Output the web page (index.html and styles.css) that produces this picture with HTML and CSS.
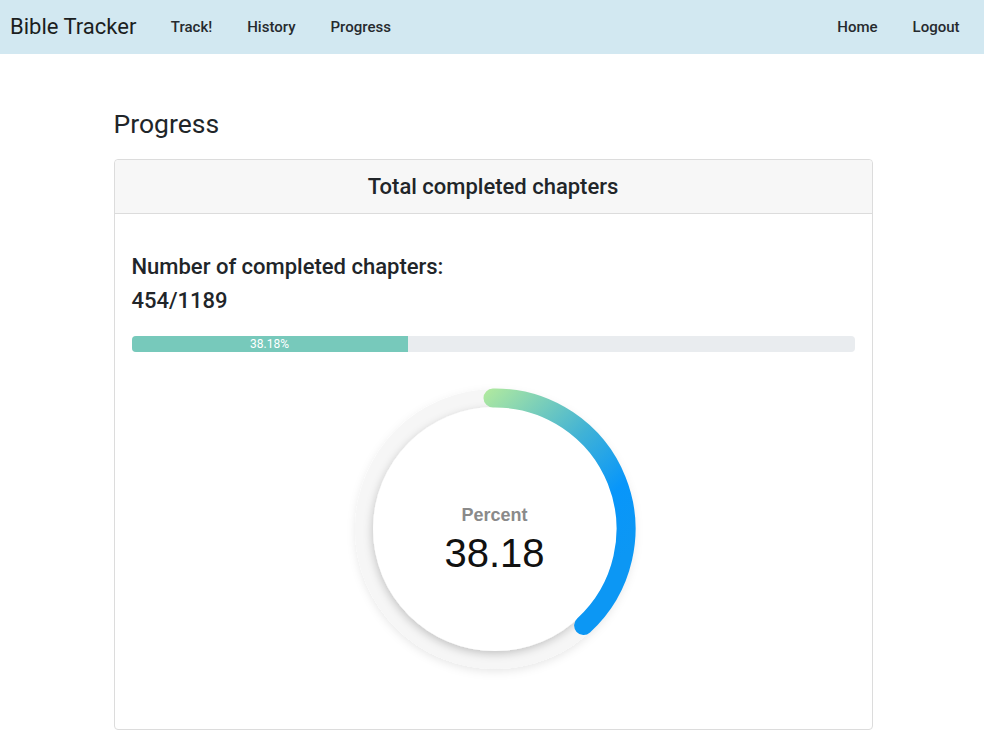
FILE: index.html
```html
<!DOCTYPE html>
<html lang="en">
<head>
<meta charset="utf-8">
<title>Bible Tracker - Progress</title>
<link rel="stylesheet" href="styles.css">
</head>
<body>
<nav class="navbar">
  <a class="brand" href="#">Bible Tracker</a>
  <ul class="nav-links">
    <li><a href="#">Track!</a></li>
    <li><a href="#">History</a></li>
    <li><a href="#">Progress</a></li>
  </ul>
  <ul class="nav-links nav-right">
    <li><a href="#">Home</a></li>
    <li><a href="#">Logout</a></li>
  </ul>
</nav>
<main class="container">
  <h2 class="page-title">Progress</h2>
  <section class="card">
    <div class="card-header">Total completed chapters</div>
    <div class="card-body">
      <h5 class="stat-label">Number of completed chapters:</h5>
      <h5 class="stat-value">454/1189</h5>
      <div class="progress">
        <div class="progress-bar" style="width: 38.18%">38.18%</div>
      </div>
      <div class="gauge">
        <svg class="gauge-svg" width="300" height="300" viewBox="0 0 300 300">
          <defs>
            <linearGradient id="arcGrad" gradientUnits="userSpaceOnUse" x1="135" y1="19" x2="281" y2="175">
              <stop offset="0" stop-color="#aee8a0"/>
              <stop offset="0.45" stop-color="#40b2d6"/>
              <stop offset="0.75" stop-color="#0896fa"/>
              <stop offset="1" stop-color="#0c97f4"/>
            </linearGradient>
            <filter id="outerShadow" x="-20%" y="-20%" width="140%" height="140%">
              <feDropShadow dx="0" dy="3" stdDeviation="4" flood-color="#000" flood-opacity="0.09"/>
            </filter>
            <filter id="innerShadow" x="-20%" y="-20%" width="140%" height="140%">
              <feDropShadow dx="-1" dy="3" stdDeviation="4" flood-color="#000" flood-opacity="0.2"/>
            </filter>
          </defs>
          <circle cx="150" cy="150" r="140" fill="#f6f6f6" filter="url(#outerShadow)"/>
          <circle cx="150" cy="150" r="122" fill="#ffffff" filter="url(#innerShadow)"/>
          <path d="M148 19 A131 131 0 0 1 238.6 246.5" fill="none" stroke="url(#arcGrad)" stroke-width="19" stroke-linecap="round"/>
        </svg>
        <div class="gauge-text">
          <div class="gauge-label">Percent</div>
          <div class="gauge-value">38.18</div>
        </div>
      </div>
    </div>
  </section>
</main>
</body>
</html>
```
FILE: styles.css
```css
* { box-sizing: border-box; }
html, body {
  margin: 0;
  padding: 0;
  background: #fff;
  font-family: Roboto, "Liberation Sans", Arial, sans-serif;
  color: #212529;
}
a { text-decoration: none; }

.navbar {
  display: flex;
  align-items: center;
  height: 54px;
  padding: 0 7px 0 10px;
  background: #d2e8f1;
}
.brand {
  font-size: 22px;
  color: #1b1e21;
  margin-right: 17px;
  line-height: 1;
}
.nav-links {
  display: flex;
  list-style: none;
  margin: 0;
  padding: 0;
}
.nav-links a {
  display: block;
  padding: 8px 17.5px;
  font-size: 15px;
  font-weight: 500;
  color: #262a2e;
}
.nav-right { margin-left: auto; }

.container {
  width: 759px;
  margin: 0 auto;
  padding-top: 54px;
  position: relative;
  left: 1px;
}
.page-title {
  margin: 0 0 19px;
  font-size: 26.5px;
  font-weight: 400;
  line-height: 32px;
  color: #212529;
}

.card {
  border: 1px solid #dcdcdc;
  border-radius: 4px;
  background: #fff;
}
.card-header {
  height: 54px;
  display: flex;
  align-items: center;
  justify-content: center;
  background: #f7f7f7;
  border-bottom: 1px solid #dcdcdc;
  font-size: 22px;
  font-weight: 500;
  border-radius: 4px 4px 0 0;
}
.card-body {
  padding: 40px 17px 50px;
}
.stat-label, .stat-value {
  margin: 0 0 8px;
  font-size: 22px;
  font-weight: 500;
  line-height: 26px;
  color: #212529;
}
.stat-value { margin-bottom: 22px; }

.progress {
  height: 16px;
  background: #e9ecef;
  border-radius: 4px;
  overflow: hidden;
  display: flex;
}
.progress-bar {
  background: #77c9bb;
  color: #fff;
  font-size: 12px;
  line-height: 16px;
  text-align: center;
}

.gauge {
  display: grid;
  justify-content: center;
  margin-top: 27px;
  margin-left: 3px;
}
.gauge-svg, .gauge-text { grid-area: 1 / 1; }
.gauge-svg { display: block; overflow: visible; }
.gauge-text {
  display: flex;
  flex-direction: column;
  align-items: center;
  justify-content: center;
  font-family: "Liberation Sans", Arial, sans-serif;
  padding-top: 20px;
}
.gauge-label {
  font-size: 18px;
  font-weight: 700;
  color: #8a8a8a;
  line-height: 22px;
}
.gauge-value {
  font-size: 40px;
  color: #111;
  line-height: 44px;
  margin-top: 5px;
}
```
